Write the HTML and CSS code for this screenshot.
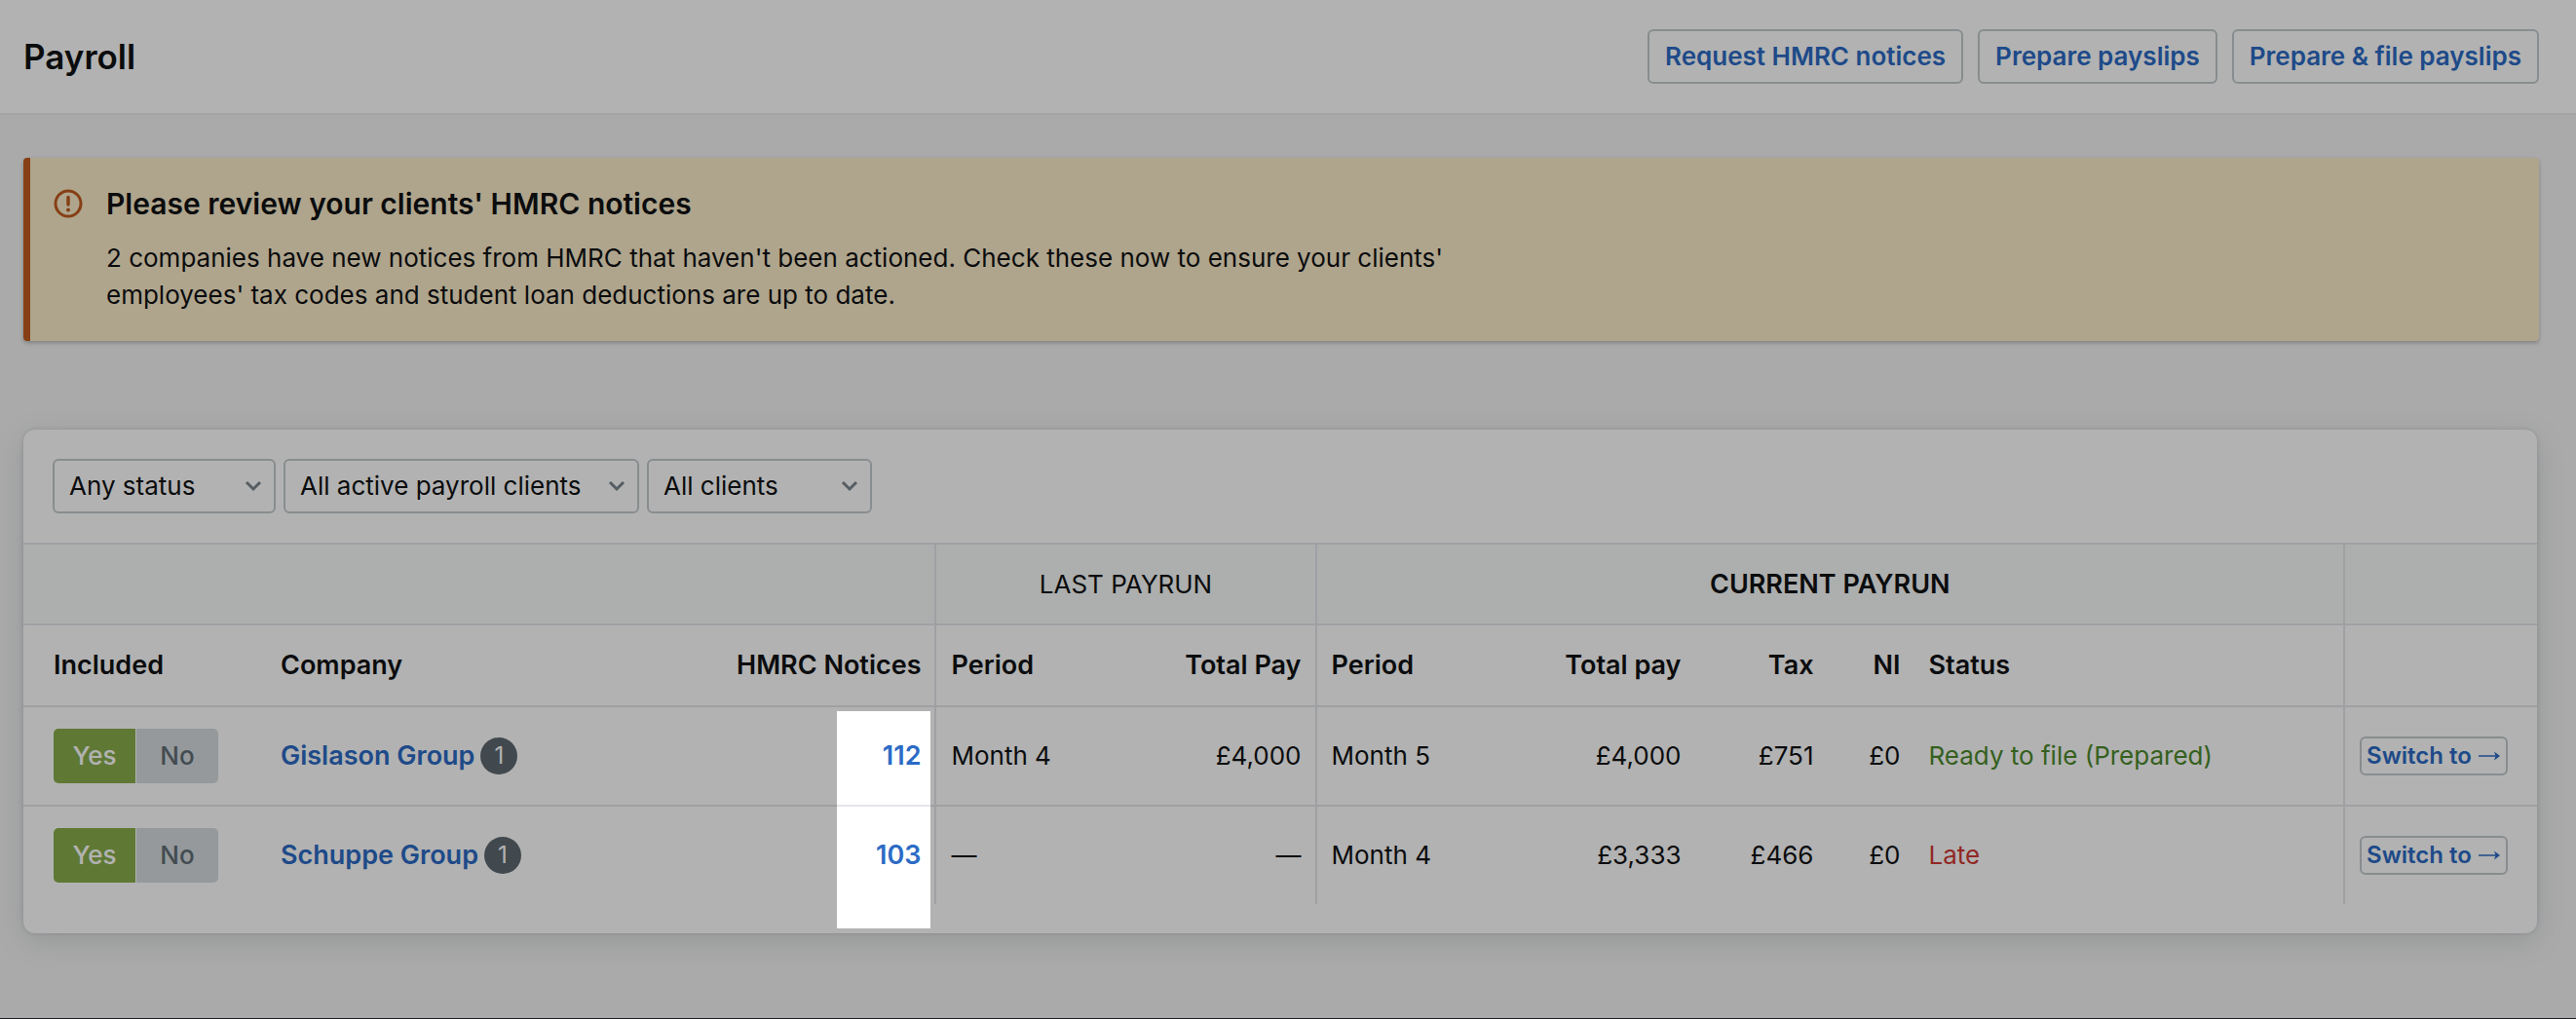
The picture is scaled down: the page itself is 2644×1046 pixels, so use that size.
FILE: index.html
```html
<!DOCTYPE html>
<html lang="en">
<head>
<meta charset="utf-8">
<meta name="viewport" content="width=device-width, initial-scale=1">
<title>Payroll</title>
<link rel="stylesheet" href="styles.css">
</head>
<body>
<header class="page-header">
  <h1 class="page-title">Payroll</h1>
  <div class="actions">
    <button type="button" class="button">Request HMRC notices</button>
    <button type="button" class="button">Prepare payslips</button>
    <button type="button" class="button">Prepare &amp; file payslips</button>
  </div>
</header>
<main class="content">
  <section class="alert">
    <svg class="alert-icon" viewBox="0 0 32 32" aria-hidden="true">
      <circle cx="16" cy="16" r="13" fill="none" stroke="currentColor" stroke-width="3"/>
      <path d="M16 9.5v7.500" stroke="currentColor" stroke-width="3.500" stroke-linecap="round"/>
      <circle cx="16" cy="22.500" r="2" fill="currentColor"/>
    </svg>
    <div class="alert-body">
      <h2 class="alert-title">Please review your clients' HMRC notices</h2>
      <p class="alert-text">2 companies have new notices from HMRC that haven't been actioned. Check these now to ensure your clients' employees' tax codes and student loan deductions are up to date.</p>
    </div>
  </section>

  <section class="card">
    <form class="filters">
      <div class="select select-status">
        <select aria-label="Status"><option>Any status</option></select>
        <svg class="chevron" viewBox="0 0 18 12" aria-hidden="true"><path d="M2 2l7 7 7-7"/></svg>
      </div>
      <div class="select select-payroll">
        <select aria-label="Payroll clients"><option>All active payroll clients</option></select>
        <svg class="chevron" viewBox="0 0 18 12" aria-hidden="true"><path d="M2 2l7 7 7-7"/></svg>
      </div>
      <div class="select select-clients">
        <select aria-label="Clients"><option>All clients</option></select>
        <svg class="chevron" viewBox="0 0 18 12" aria-hidden="true"><path d="M2 2l7 7 7-7"/></svg>
      </div>
    </form>
    <table class="payroll">
      <colgroup><col class="col-included"><col><col class="col-notices"></colgroup>
      <colgroup><col class="col-period"><col class="col-pay"></colgroup>
      <colgroup><col class="col-period"><col class="col-pay"><col class="col-tax"><col class="col-ni"><col></colgroup>
      <colgroup><col class="col-switch"></colgroup>
      <thead>
        <tr class="groups">
          <td colspan="3"></td>
          <th class="divided group-last" colspan="2" scope="colgroup">LAST PAYRUN</th>
          <th class="divided" colspan="5" scope="colgroup">CURRENT PAYRUN</th>
          <td class="divided"></td>
        </tr>
        <tr class="labels">
          <th class="first" scope="col">Included</th>
          <th scope="col">Company</th>
          <th class="number" scope="col">HMRC Notices</th>
          <th class="divided" scope="col">Period</th>
          <th class="number" scope="col">Total Pay</th>
          <th class="divided" scope="col">Period</th>
          <th class="number" scope="col">Total pay</th>
          <th class="number" scope="col">Tax</th>
          <th class="number" scope="col">NI</th>
          <th scope="col">Status</th>
          <td class="divided"></td>
        </tr>
      </thead>
      <tbody>
        <tr>
          <td class="first"><div class="toggle" role="group" aria-label="Include Gislason Group"><button type="button" class="yes" aria-pressed="true">Yes</button><button type="button" class="no" aria-pressed="false">No</button></div></td>
          <td><div class="company"><a href="#gislason">Gislason Group</a><span class="badge">1</span></div></td>
          <td class="number notices"><a href="#gislason-notices">112</a><div class="spotlight"></div></td>
          <td class="divided">Month 4</td>
          <td class="number">£4,000</td>
          <td class="divided">Month 5</td>
          <td class="number">£4,000</td>
          <td class="number">£751</td>
          <td class="number">£0</td>
          <td class="ready">Ready to file (Prepared)</td>
          <td class="divided"><button type="button" class="button button-small">Switch to <svg class="arrow" viewBox="0 0 24 12" aria-hidden="true"><path d="M1 6h19" fill="none" stroke="currentColor" stroke-width="1.500"/><path d="M17 1.500L23 6l-6 4.500 1.500-4.500z" fill="currentColor"/></svg></button></td>
        </tr>
        <tr>
          <td class="first"><div class="toggle" role="group" aria-label="Include Schuppe Group"><button type="button" class="yes" aria-pressed="true">Yes</button><button type="button" class="no" aria-pressed="false">No</button></div></td>
          <td><div class="company"><a href="#schuppe">Schuppe Group</a><span class="badge">1</span></div></td>
          <td class="number"><a href="#schuppe-notices">103</a></td>
          <td class="divided">—</td>
          <td class="number">—</td>
          <td class="divided">Month 4</td>
          <td class="number">£3,333</td>
          <td class="number">£466</td>
          <td class="number">£0</td>
          <td class="late">Late</td>
          <td class="divided"><button type="button" class="button button-small">Switch to <svg class="arrow" viewBox="0 0 24 12" aria-hidden="true"><path d="M1 6h19" fill="none" stroke="currentColor" stroke-width="1.500"/><path d="M17 1.500L23 6l-6 4.500 1.500-4.500z" fill="currentColor"/></svg></button></td>
        </tr>
      </tbody>
    </table>
  </section>
</main>
</body>
</html>
```
FILE: styles.css
```css
* {
  box-sizing: border-box;
}

body {
  margin: 0;
  min-height: 100vh;
  background: #f4f4f4;
  border-bottom: 1px solid #1c1c1e;
  color: #101214;
  font: 400 26px/38px Inter, "Liberation Sans", sans-serif;
}

button,
select {
  font: inherit;
  color: inherit;
}

a {
  color: #2c6bc5;
  font-size: 27px;
  font-weight: 600;
  text-decoration: none;
}

.page-header {
  display: flex;
  align-items: center;
  justify-content: space-between;
  min-height: 118px;
  padding: 0 38px 0 24px;
  background: #fff;
  border-bottom: 2px solid #e9ebec;
}

.page-title {
  margin: 0;
  font-size: 35px;
  font-weight: 600;
}

.actions {
  display: flex;
  gap: 15px;
}

.button {
  height: 56px;
  padding: 0 16px;
  border: 2px solid #c3cacd;
  border-radius: 6px;
  background: #fff;
  color: #2c6bc5;
  font-size: 26px;
  font-weight: 600;
  line-height: 38px;
  white-space: nowrap;
}

.button-small {
  display: flex;
  align-items: center;
  justify-content: center;
  gap: 6px;
  width: 100%;
  height: 40px;
  padding: 0;
  font-size: 24px;
  line-height: 32px;
}

.arrow {
  width: 24px;
  height: 12px;
}

.content {
  padding: 44px 38px 0 24px;
}

.alert {
  display: flex;
  gap: 23px;
  padding: 28px 24px 28px 23px;
  background: #fbecca;
  border-left: 7px solid #c05b1e;
  border-radius: 4px;
  box-shadow: 0 2px 4px rgba(0, 0, 0, 0.25);
}

.alert-icon {
  flex: none;
  width: 32px;
  height: 32px;
  margin-top: 3px;
  color: #c05b1e;
}

.alert-title {
  margin: 0 0 18px;
  font-size: 30px;
  font-weight: 600;
  line-height: 38px;
}

.alert-text {
  max-width: 1400px;
  margin: 0;
}

.card {
  margin-top: 91px;
  margin-right: 2px;
  padding-bottom: 30px;
  background: #fff;
  border-radius: 12px;
  box-shadow: 0 0 4px rgba(40, 50, 90, 0.15), 0 8px 30px rgba(40, 60, 70, 0.15);
}

.filters {
  display: flex;
  gap: 8px;
  padding: 30px;
}

.select {
  display: grid;
  align-items: center;
}

.select select,
.select .chevron {
  grid-area: 1 / 1;
}

.select select {
  width: 100%;
  height: 56px;
  padding: 0 40px 0 15px;
  appearance: none;
  background: #fff;
  border: 2px solid #c3cacd;
  border-radius: 6px;
}

.select-status {
  width: 229px;
}

.select-payroll {
  width: 365px;
}

.select-clients {
  width: 231px;
}

.chevron {
  justify-self: end;
  width: 18px;
  height: 12px;
  margin-right: 14px;
  fill: none;
  stroke: #7c868d;
  stroke-width: 3;
  pointer-events: none;
}

.payroll {
  width: 100%;
  table-layout: fixed;
  border-collapse: separate;
  border-spacing: 0;
}

.col-included {
  width: 249px;
}

.col-notices {
  width: 246px;
}

.col-period {
  width: 200px;
}

.col-pay {
  width: 190px;
}

.col-tax {
  width: 136px;
}

.col-ni {
  width: 89px;
}

.col-switch {
  width: 199px;
}

.payroll th,
.payroll td {
  padding: 0 15px;
  border-top: 2px solid #e4e6ea;
  text-align: left;
  white-space: nowrap;
}

.payroll th {
  font-size: 27px;
  font-weight: 600;
}

.payroll .first {
  padding-left: 31px;
}

.payroll .number {
  padding-right: 14px;
  text-align: right;
}

.payroll .divided {
  border-left: 2px solid #e4e6ea;
}

.payroll .divided:last-child {
  padding-right: 30px;
}

.groups {
  height: 83px;
}

.groups th,
.groups td {
  background: #f8faf9;
}

.payroll .groups th {
  text-align: center;
}

.payroll .groups .group-last {
  font-size: 26px;
  font-weight: 400;
}

.labels {
  height: 84px;
}

.payroll tbody tr {
  height: 102px;
}

.toggle {
  display: flex;
  gap: 1px;
}

.toggle button {
  width: 84px;
  height: 56px;
  padding: 0;
  border: 0;
  font-weight: 500;
}

.toggle .yes {
  background: #88ae4c;
  border-radius: 5px 0 0 5px;
  color: #fff;
}

.toggle .no {
  background: #d6dce0;
  border-radius: 0 5px 5px 0;
  color: #616d74;
}

.company {
  display: flex;
  align-items: center;
  gap: 6px;
}

.badge {
  width: 38px;
  height: 38px;
  border-radius: 19px;
  background: #5d6970;
  color: #fff;
  font-size: 24px;
  text-align: center;
}

.notices {
  position: relative;
}

.spotlight {
  position: absolute;
  top: 4px;
  right: 4px;
  width: 96px;
  height: 223px;
  box-shadow: 0 0 0 9999px rgba(0, 0, 0, 0.3);
  pointer-events: none;
}

.ready {
  color: #4c8a2c;
}

.late {
  color: #d03a36;
}
```
